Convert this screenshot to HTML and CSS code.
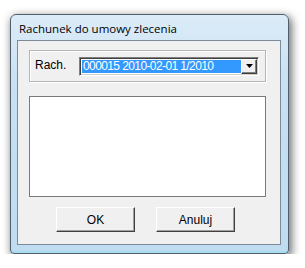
FILE: index.html
```html
<!DOCTYPE html>
<html>

<head>
    <title>Rachunek do umowy zlecenia</title>
    <link rel="stylesheet" href="styles.css">
</head>

<body>
    <div class="window">
        <div class="titlebar">Rachunek do umowy zlecenia</div>
        <div class="client">
            <div class="group">
                <label for="rach">Rach.</label>
                <div class="combo" id="rach">
                    <span class="combo-value">000015 2010-02-01 1/2010</span>
                    <span class="combo-btn">
                        <svg width="7" height="4" viewBox="0 0 7 4"><path d="M0 0h7L3.5 4z" fill="#000"/></svg>
                    </span>
                </div>
            </div>
            <div class="listbox"></div>
            <div class="buttons">
                <button class="btn">OK</button>
                <button class="btn">Anuluj</button>
            </div>
        </div>
    </div>
</body>

</html>
```

FILE: styles.css
```css
* {
    box-sizing: border-box;
}

body {
    margin: 0;
    background: #ffffff;
    font-family: "Liberation Sans", Arial, sans-serif;
    font-size: 11px;
    color: #000;
}

.window {
    width: 279px;
    height: 240px;
    margin: 14px 0 0 10px;
    padding: 0 7px 8px 6px;
    display: flex;
    flex-direction: column;
    border: 1px solid #4f5f6e;
    border-radius: 6px 6px 4px 4px;
    background: linear-gradient(#dcecf8, #c8e0f2 30%, #bfdcf0);
    box-shadow: inset 0 -2px 0 #a9dcef, 2px 3px 9px 1px rgba(0, 0, 0, 0.55);
}

.titlebar {
    height: 25px;
    padding: 7px 0 0 2px;
    font-family: "Open Sans", sans-serif;
    font-size: 11.5px;
    line-height: 14px;
    color: #000;
}

.client {
    flex: 1;
    display: flex;
    flex-direction: column;
    padding: 9px 14px 0 11px;
    background: #f0f0f0;
    border: 1px solid #7d8a98;
}

.group {
    display: flex;
    align-items: center;
    height: 32px;
    padding: 0 6px 0 5px;
    border: 1px solid #b5b5b5;
    box-shadow: inset 1px 1px 0 #fff, 1px 1px 0 #fff;
}

.group label {
    width: 44px;
    margin-top: -3px;
    font-size: 12px;
}

.combo {
    flex: 1;
    display: flex;
    height: 19px;
    border: 1px solid;
    border-color: #808080 #fff #fff #808080;
    box-shadow: inset 1px 1px 0 #404040, inset -1px -1px 0 #d4d0c8;
    background: #fff;
    padding: 2px;
}

.combo-value {
    flex: 1;
    background: #3399ff;
    color: #fff;
    font-size: 12px;
    line-height: 13px;
    padding-left: 1px;
    letter-spacing: -0.6px;
}

.combo-btn {
    width: 16px;
    display: flex;
    align-items: center;
    justify-content: center;
    margin: -1px -1px -1px 0;
    background: #f0f0f0;
    border: 1px solid;
    border-color: #fff #404040 #404040 #fff;
    box-shadow: inset -1px -1px 0 #808080;
}

.listbox {
    height: 101px;
    margin-top: 14px;
    background: #fff;
    border: 1px solid #7a7a7a;
}

.buttons {
    display: flex;
    justify-content: center;
    gap: 21px;
    margin-top: 10px;
    padding-right: 4px;
}

.btn {
    width: 79px;
    height: 25px;
    padding: 0;
    font-family: "Liberation Sans", Arial, sans-serif;
    font-size: 12px;
    background: #f0f0f0;
    border: 1px solid;
    border-color: #fff #404040 #404040 #fff;
    box-shadow: inset -1px -1px 0 #a0a0a0;
}
```
